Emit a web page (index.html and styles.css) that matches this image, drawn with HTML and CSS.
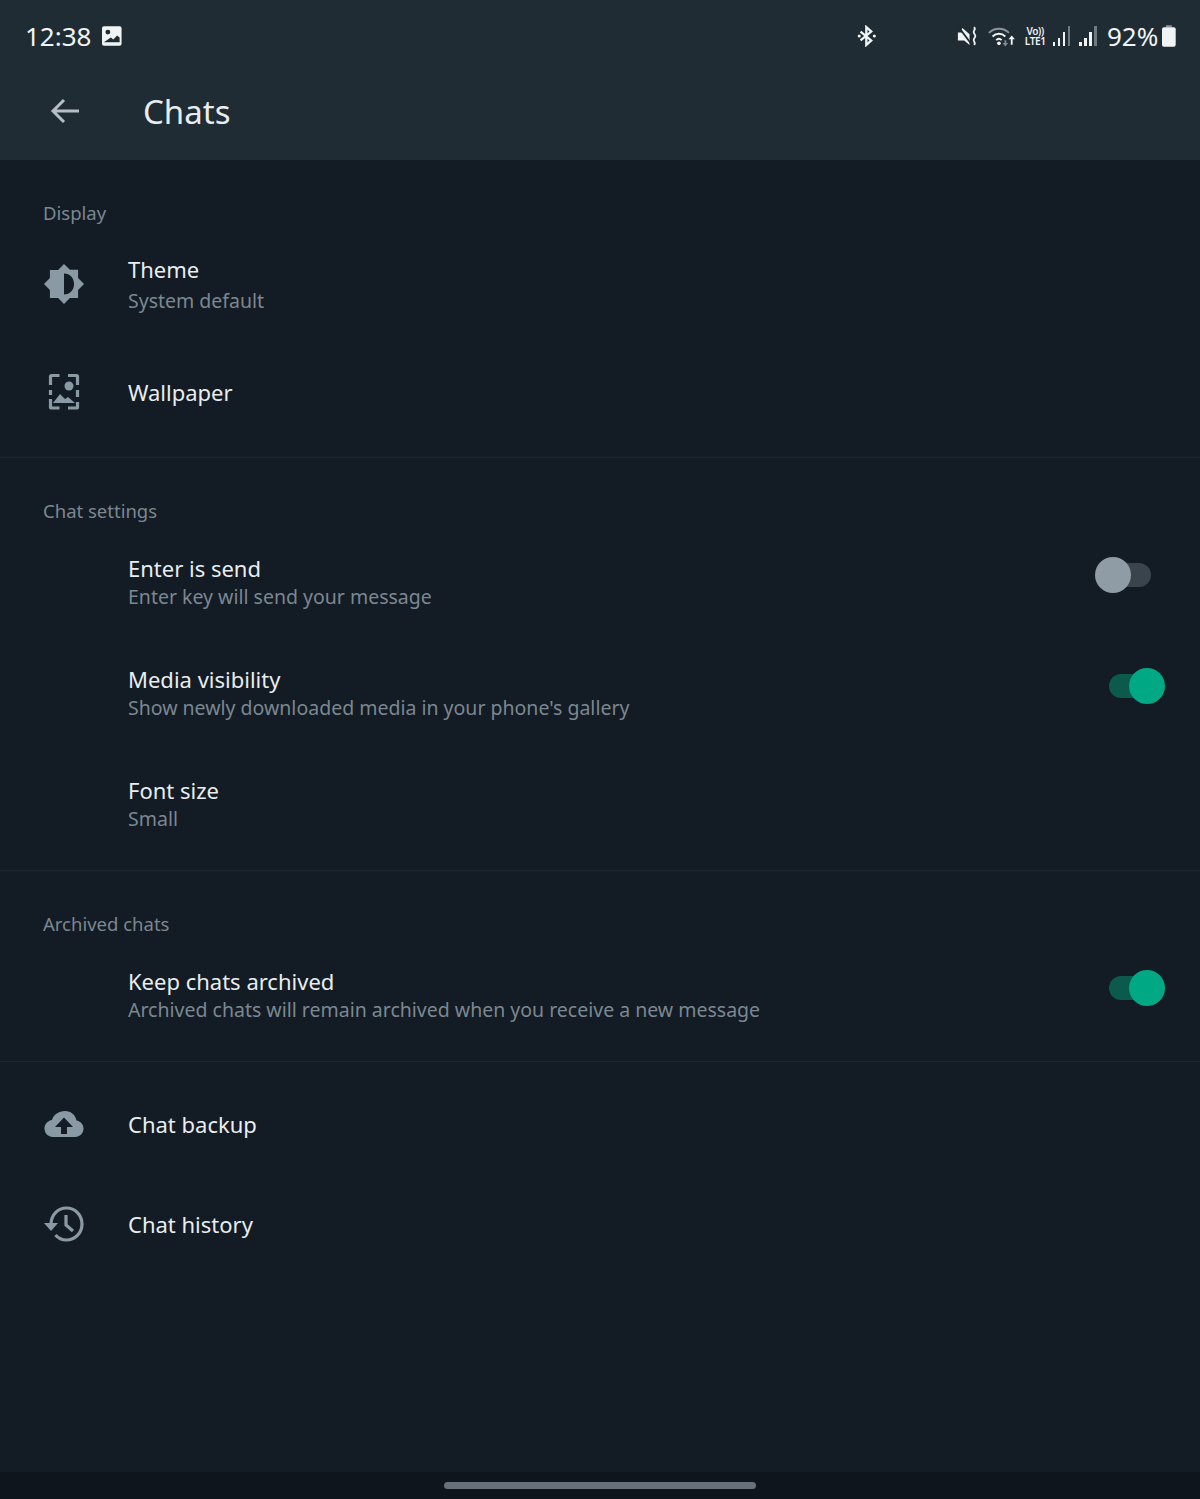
FILE: index.html
```html
<!DOCTYPE html>
<html lang="en">
<head>
<meta charset="utf-8">
<title>Chats</title>
<link rel="stylesheet" href="styles.css">
</head>
<body>
<div class="page">
  <header class="header">
    <div class="status">
      <span class="time">12:38</span>
      <svg class="st-img" viewBox="0 0 20 20"><path fill="#f1f4f5" fill-rule="evenodd" d="M2 0h16a2 2 0 0 1 2 2v16a2 2 0 0 1-2 2H2a2 2 0 0 1-2-2V2a2 2 0 0 1 2-2zM6 3.500a2.500 2.500 0 1 0 0 5 2.500 2.500 0 0 0 0-5zM2 16.500h16v-5l-2.500-2-4 4-2.500-2z"/></svg>
      <svg class="st-bt" viewBox="0 0 22 24"><g fill="none" stroke="#f1f4f5" stroke-width="2.600"><path d="M4 7l12 10-5.500 5V2L16 7 4 17"/></g><circle cx="2.500" cy="12" r="1.700" fill="#f1f4f5"/><circle cx="19.500" cy="12" r="1.700" fill="#f1f4f5"/></svg>
      <svg class="st-mute" viewBox="0 0 24 24"><path fill="#f1f4f5" d="M1 8h5l-1-3 1-2 8 7v12l-6-5H1z"/><path stroke="#1f2b33" stroke-width="2" d="M1 1l15 20"/><path fill="none" stroke="#f1f4f5" stroke-width="2" d="M19 2c3 3-2 4 0 7s2 3 0 6 3 4 0 7"/></svg>
      <svg class="st-wifi" viewBox="0 0 30 22"><g fill="none" stroke-width="2"><path stroke="#8b959b" d="M1 7c6-6 16-6 22 0"/><path stroke="#f1f4f5" d="M5 11c4-4 10-4 14 0M9 15c2-2 4-2 6 0"/></g><circle cx="12" cy="18.500" r="2" fill="#f1f4f5"/><path fill="#7e8a91" d="M18 15h2v3h2l-3 4-3-4h2z"/><path fill="#f1f4f5" d="M26 10l3.500 4H27v6h-2v-6h-2.500z"/></svg>
      <span class="st-lte"><span>Vo))</span><span>LTE1</span></span>
      <span class="signal"><i class="b1"></i><i class="b2"></i><i class="b3"></i><i class="b4"></i></span>
      <span class="signal second"><i class="b1"></i><i class="b2"></i><i class="b3"></i><i class="b4"></i></span>
      <span class="pct">92%</span>
      <svg class="st-batt" viewBox="0 0 14 22"><path fill="#8b959b" d="M4 0h6v2H4z"/><path fill="#f1f4f5" d="M2 2h10a2 2 0 0 1 2 2v16a2 2 0 0 1-2 2H2a2 2 0 0 1-2-2V4a2 2 0 0 1 2-2z"/></svg>
    </div>
    <div class="toolbar">
      <svg class="back" viewBox="0 0 30 26"><path fill="none" stroke="#b4bec4" stroke-width="3" d="M29 13H3M14 2L3 13l11 11"/></svg>
      <h1 class="title">Chats</h1>
    </div>
  </header>
  <main class="content">
    <section class="section first">
      <h2 class="heading">Display</h2>
      <div class="row tall">
        <svg class="icon" viewBox="0 0 40 40"><path fill="#8a9aa5" fill-rule="evenodd" d="M20 0l5.900 5.800 8.200-.0 .0 8.200L40 20l-5.900 5.900v8.200h-8.200L20 40l-5.900-5.900H5.900v-8.200L0 20l5.900-5.900V5.900h8.200zM20 9.500v21c6 0 10-4.500 10-10.500S26 9.500 20 9.500z" transform="translate(0 0)"/><path fill="#121b24" d="M20 9v22c6.500 0 10.500-5 10.500-11S26.500 9 20 9z" opacity="0"/></svg>
        <div class="texts gap"><div class="t">Theme</div><div class="s">System default</div></div>
      </div>
      <div class="row single">
        <svg class="icon" viewBox="0 0 40 40"><g fill="none" stroke="#8a9aa5" stroke-width="3.200"><path d="M6.500 13V4.500a1 1 0 0 1 1-1h8M24 3.500h8.500a1 1 0 0 1 1 1V13M33.500 18v7M33.500 30v5a1 1 0 0 1-1 1H24M15.500 36H7.500a1 1 0 0 1-1-1V27M6.500 18v5"/></g><circle cx="25" cy="14" r="4.500" fill="#8a9aa5"/><path fill="#8a9aa5" d="M9 31l7-9 5 5 3-2 7 6z"/></svg>
        <div class="texts"><div class="t">Wallpaper</div></div>
      </div>
    </section>
    <section class="section">
      <h2 class="heading">Chat settings</h2>
      <div class="row">
        <div class="texts indent"><div class="t">Enter is send</div><div class="s">Enter key will send your message</div></div>
        <span class="switch off"><span class="thumb"></span></span>
      </div>
      <div class="row">
        <div class="texts indent"><div class="t">Media visibility</div><div class="s">Show newly downloaded media in your phone's gallery</div></div>
        <span class="switch on"><span class="thumb"></span></span>
      </div>
      <div class="row">
        <div class="texts indent"><div class="t">Font size</div><div class="s">Small</div></div>
      </div>
    </section>
    <section class="section">
      <h2 class="heading">Archived chats</h2>
      <div class="row">
        <div class="texts indent"><div class="t">Keep chats archived</div><div class="s">Archived chats will remain archived when you receive a new message</div></div>
        <span class="switch on"><span class="thumb"></span></span>
      </div>
    </section>
    <section class="section last">
      <div class="row single">
        <svg class="icon" viewBox="0 0 40 40"><path fill="#8a9aa5" fill-rule="evenodd" d="M21 7c6 0 10.500 4 11.500 9.500C36.500 17 39.500 20.500 39.500 24.500c0 4.500-3.500 8.500-8.500 8.500H9c-5 0-8.500-4-8.500-8.500 0-4.500 3.500-8 7.500-8.500C9.500 10.500 15 7 21 7zM20 13.500L11 23h6v7h6v-7h6z"/></svg>
        <div class="texts"><div class="t">Chat backup</div></div>
      </div>
      <div class="row single">
        <svg class="icon" viewBox="0 0 40 40"><g fill="none" stroke="#8a9aa5" stroke-width="3.200"><path d="M7 20C7 11 14 4 22.500 4S38 11 38 20s-7 16-15.500 16c-4.500 0-8.500-2-11-5"/><path d="M22 11v10l7 6"/></g><path fill="#8a9aa5" d="M0 19h14l-7 8z"/></svg>
        <div class="texts"><div class="t">Chat history</div></div>
      </div>
    </section>
  </main>
  <footer class="navbar"><span class="pill"></span></footer>
</div>
</body>
</html>
```
FILE: styles.css
```css
* { box-sizing: border-box; }
html, body { margin: 0; padding: 0; }
body { background: #131b24; font-family: "Noto Sans", "Open Sans", sans-serif; }
.page { height: 1499px; display: flex; flex-direction: column; overflow: hidden; }

.header { height: 160px; background: #202c34; flex: none; }
.status { height: 72px; display: flex; align-items: center; padding: 0 24px 0 25px; color: #f1f4f5; }
.time { font-size: 26px; line-height: 1; margin-right: 11px; }
.st-img { width: 20px; height: 20px; }
.st-bt { width: 20px; height: 22px; margin-left: 735px; }
.st-mute { width: 22px; height: 24px; margin-left: 80px; }
.st-wifi { width: 28px; height: 21px; margin-left: 10px; }
.st-lte { display: flex; flex-direction: column; align-items: center; font-size: 10px; line-height: 10px; font-weight: 600; margin-left: 8px; width: 24px; letter-spacing: -0.300px; }
.signal { display: flex; align-items: flex-end; gap: 2.500px; height: 20px; margin-left: 6px; }
.signal.second { margin-left: 9px; }
.signal i { display: block; width: 2.500px; background: #f1f4f5; }
.signal .b1 { height: 4px; }
.signal .b2 { height: 8px; }
.signal .b3 { height: 14px; }
.signal .b4 { height: 20px; background: #6e7a81; }
.pct { font-size: 26px; line-height: 1; margin-left: 10px; }
.st-batt { width: 14px; height: 22px; margin-left: 4px; }

.toolbar { height: 88px; display: flex; align-items: center; padding: 0 0 10px 50px; }
.back { width: 30px; height: 26px; }
.title { margin: 0 0 0 63px; font-size: 33px; font-weight: 400; color: #e9edef; line-height: 1; }

.content { flex: 1; }
.section { border-bottom: 1px solid #1e2730; padding-top: 38px; padding-bottom: 11px; }
.section.first { padding-bottom: 15px; }
.section.last { border-bottom: 0; padding-top: 12px; }
.heading { margin: 0 0 0 43px; height: 30px; font-size: 18.500px; line-height: 30px; font-weight: 400; color: #7b8891; }
.row { height: 111px; display: flex; align-items: center; padding-right: 49px; }
.row.tall { height: 114px; padding-bottom: 2px; }
.row.single { height: 100px; }
.icon { width: 40px; height: 40px; margin: 0 44px; flex: none; }
.texts { flex: 1; min-width: 0; }
.indent { margin-left: 128px; }
.t { font-size: 22px; line-height: 30px; color: #e9edef; }
.s { font-size: 19.500px; line-height: 28px; color: #7b8891; }
.gap .s { margin-top: 3px; }

.switch { position: relative; width: 42px; height: 24px; border-radius: 12px; margin-bottom: 13px; flex: none; }
.switch.off { background: #3a444c; }
.switch.on { background: #0b5a4c; }
.thumb { position: absolute; top: -6px; width: 36px; height: 36px; border-radius: 50%; }
.off .thumb { left: -14px; background: #8f9ba5; }
.on .thumb { right: -14px; background: #00a884; }

.navbar { height: 27px; flex: none; background: #0e151c; display: flex; justify-content: center; padding-top: 10px; }
.pill { width: 312px; height: 7px; border-radius: 4px; background: #687079; }
```
